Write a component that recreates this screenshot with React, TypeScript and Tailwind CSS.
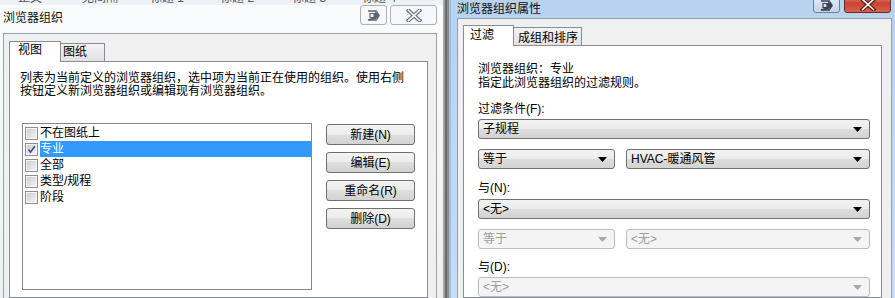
import React from 'react';

const FONT = "font-['Liberation_Sans','Noto_Sans_CJK_SC',sans-serif]";

const Combo = ({ text, className, disabled }: { text: string; className: string; disabled?: boolean }) => {
  return (
    <div
      className={`${className} flex h-[20px] items-center justify-between rounded-[3px] border pl-[4px] pr-[7px] leading-[14px] ${
        disabled
          ? 'border-[#b9bcc0] bg-[#f4f4f4] text-[#9d9d9d]'
          : 'border-[#707070] bg-[linear-gradient(#f2f2f2,#ebebeb_50%,#dddddd_50%,#d3d3d3)] text-black'
      }`}
    >
      <span>{text}</span>
      <svg width="9" height="5" viewBox="0 0 9 5">
        <path d="M0 0h9L4.5 5z" fill={disabled ? '#a8a8a8' : '#000'} />
      </svg>
    </div>
  );
};

const Btn = ({ text }: { text: string }) => (
  <div className="flex h-[21px] w-[89px] items-center justify-center rounded-[3px] border border-[#707070] bg-[linear-gradient(#f4f4f4,#ececec_50%,#dfdfdf_50%,#d2d2d2)] leading-[14px]">
    {text}
  </div>
);

const CheckBox = ({ checked }: { checked?: boolean }) => (
  <div className="flex h-[13px] w-[13px] shrink-0 items-center justify-center border border-[#8f8f8f] bg-[#f4f4f4]">
    <div className="flex h-[9px] w-[9px] items-center justify-center bg-linear-to-br from-[#c9ccd2] to-[#f4f4f4]">
      {checked && (
        <svg width="9" height="9" viewBox="0 0 9 9">
          <path d="M1.5 4.5L3.5 7.2L7.8 1.2" stroke="#3e4f8c" strokeWidth="1.6" fill="none" />
        </svg>
      )}
    </div>
  </div>
);

const RestoreIcon = ({ color }: { color: string }) => (
  <svg width="13" height="11" viewBox="0 0 13 11">
    <path d="M1 1h8v2.5M9 7.5V10H1z" stroke={color} strokeWidth="1.6" fill="none" />
    <path d="M3 3.5h4v4H3z" stroke={color} strokeWidth="1.2" fill="none" />
    <path d="M7 3h3V1l3 4.5L10 10V8H7z" fill={color} />
  </svg>
);

const CloseIcon = ({ outline, fill }: { outline: string; fill: string }) => (
  <svg width="16" height="13" viewBox="0 0 16 13">
    <path d="M2.5 1.5L13.5 11.5M13.5 1.5L2.5 11.5" stroke={outline} strokeWidth="4" strokeLinecap="square" />
    <path d="M2.5 1.5L13.5 11.5M13.5 1.5L2.5 11.5" stroke={fill} strokeWidth="1.6" strokeLinecap="square" />
  </svg>
);

const items = ['不在图纸上', '专业', '全部', '类型/规程', '阶段'];

const LeftDialog = () => (
  <div className="flex h-full w-[443px] shrink-0 flex-col bg-linear-to-b from-[#fbfcfd] to-[#eef0f2]">
    {/* background app ribbon peeking through the glass */}
    <div className="h-[5px] overflow-hidden bg-[#eef2f7]">
      <div className="-mt-[8px] flex text-[12px] leading-[13px] text-[#555]">
        <span className="ml-[18px]">正文</span>
        <span className="ml-[40px]">无间隔</span>
        <span className="ml-[32px]">标题 1</span>
        <span className="ml-[36px]">标题 2</span>
        <span className="ml-[38px]">标题 3</span>
        <span className="ml-[36px]">标题 4</span>
      </div>
    </div>
    <div className="flex h-[28px] items-start">
      <span className="ml-[3px] mt-[6px] leading-[14px] text-[#111]">浏览器组织</span>
      <div className="ml-auto mr-[6px] flex gap-[3px]">
        <div className="flex h-[20px] w-[27px] items-center justify-center rounded-[3px] border border-[#a9b3bf] bg-[#f6f8fa]">
          <RestoreIcon color="#5b6572" />
        </div>
        <div className="flex h-[20px] w-[47px] items-center justify-center rounded-[3px] border border-[#a9b3bf] bg-[#f6f8fa]">
          <CloseIcon outline="#6e7885" fill="#f8f9fa" />
        </div>
      </div>
    </div>
    <div className="ml-[3px] flex w-[434px] flex-1 flex-col border-x border-t border-[#9aa0a8] bg-[#f0f0f0] pl-[5px] pt-[7px]">
      <div className="flex h-[20px] items-end">
        <div className="relative z-10 -mb-px h-[21px] w-[52px] border-x border-t border-[#898c95] bg-white pl-[8px] pt-[1px] leading-[14px]">
          视图
        </div>
        <div className="h-[18px] w-[44px] border-r border-t border-[#898c95] bg-linear-to-b from-[#f3f3f3] to-[#e2e2e2] pl-[2px] pt-[1px] leading-[14px]">
          图纸
        </div>
      </div>
      <div className="w-[419px] flex-1 border border-[#898c95] bg-white pl-[10px] pt-[10px]">
        <div className="leading-[13px]">
          列表为当前定义的浏览器组织，选中项为当前正在使用的组织。使用右侧
          <br />
          按钮定义新浏览器组织或编辑现有浏览器组织。
        </div>
        <div className="mt-[25px] flex items-start">
          <div className="ml-[2px] h-[167px] w-[290px] border border-[#828790] bg-white pt-px">
            {items.map((it) => (
              <div key={it} className="flex h-[16px] items-center pl-[2px]">
                <CheckBox checked={it === '专业'} />
                <span
                  className={`ml-[2px] flex h-full flex-1 items-center leading-[14px] ${
                    it === '专业' ? 'bg-[#3399ff] text-white' : ''
                  }`}
                >
                  {it}
                </span>
              </div>
            ))}
          </div>
          <div className="ml-[14px] mt-px flex flex-col gap-[7px]">
            <Btn text="新建(N)" />
            <Btn text="编辑(E)" />
            <Btn text="重命名(R)" />
            <Btn text="删除(D)" />
          </div>
        </div>
      </div>
    </div>
  </div>
);

const RightDialog = () => (
  <div className="flex h-full w-[446px] shrink-0 flex-col border-l-2 border-[#9dbfe6] bg-linear-to-b from-[#b8d2ef] to-[#c9ddf4]">
    <div className="flex h-[23px] items-start">
      <span className="ml-[6px] mt-[2px] leading-[14px] text-[#111]">浏览器组织属性</span>
      <div className="-mt-[7px] ml-auto mr-[4px] flex gap-[4px]">
        <div className="flex h-[20px] w-[27px] items-end justify-center rounded-[3px] border border-[#6d7d93] bg-linear-to-b from-[#e9f1fa] to-[#c3d4e8] pb-[1px]">
          <RestoreIcon color="#3a4350" />
        </div>
        <div className="flex h-[20px] w-[47px] items-end justify-center rounded-[3px] border border-[#6e2a22] bg-linear-to-b from-[#e9a99a] via-[#c84330] to-[#d9634a] pb-[1px]">
          <CloseIcon outline="#5a1c14" fill="#ffffff" />
        </div>
      </div>
    </div>
    <div className="ml-[6px] flex w-[435px] flex-1 flex-col border-x border-t border-[#8fa0b4] bg-[#f0f0f0] pl-[5px] pt-[6px]">
      <div className="flex h-[20px] items-end">
        <div className="relative z-10 -mb-px h-[21px] w-[51px] border-x border-t border-[#898c95] bg-white pl-[6px] pt-[2px] leading-[14px]">
          过滤
        </div>
        <div className="h-[18px] w-[68px] border-r border-t border-[#898c95] bg-linear-to-b from-[#f3f3f3] to-[#e2e2e2] pl-[4px] pt-[3px] leading-[14px]">
          成组和排序
        </div>
      </div>
      <div className="w-[419px] flex-1 border border-[#898c95] bg-white pl-[14px] pt-[16px]">
        <div className="leading-[14px]">
          浏览器组织：专业
          <br />
          指定此浏览器组织的过滤规则。
        </div>
        <div className="mt-[12px] leading-[14px]">过滤条件(F):</div>
        <Combo text="子规程" className="mt-[3px] w-[392px]" />
        <div className="mt-[10px] flex gap-[11px]">
          <Combo text="等于" className="w-[137px]" />
          <Combo text="HVAC-暖通风管" className="w-[244px]" />
        </div>
        <div className="mt-[12px] leading-[14px]">与(N):</div>
        <Combo text="<无>" className="mt-[4px] w-[392px]" />
        <div className="mt-[10px] flex gap-[11px]">
          <Combo text="等于" className="w-[137px]" disabled />
          <Combo text="<无>" className="w-[244px]" disabled />
        </div>
        <div className="mt-[11px] leading-[14px]">与(D):</div>
        <Combo text="<无>" className="mt-[3px] w-[392px]" disabled />
      </div>
    </div>
  </div>
);

export default function App() {
  return (
    <div className={`${FONT} flex h-[298px] w-[895px] overflow-hidden bg-[#7a7a7a] text-[12px] text-black`}>
      <LeftDialog />
      {/* strip of the application window behind */}
      <div className="flex w-[6px] shrink-0">
        <div className="w-[2px] bg-[#a3a3a3]" />
        <div className="w-[2px] bg-[#6b6b6b]" />
        <div className="w-[2px] bg-[#8c8c8c]" />
      </div>
      <RightDialog />
    </div>
  );
}
